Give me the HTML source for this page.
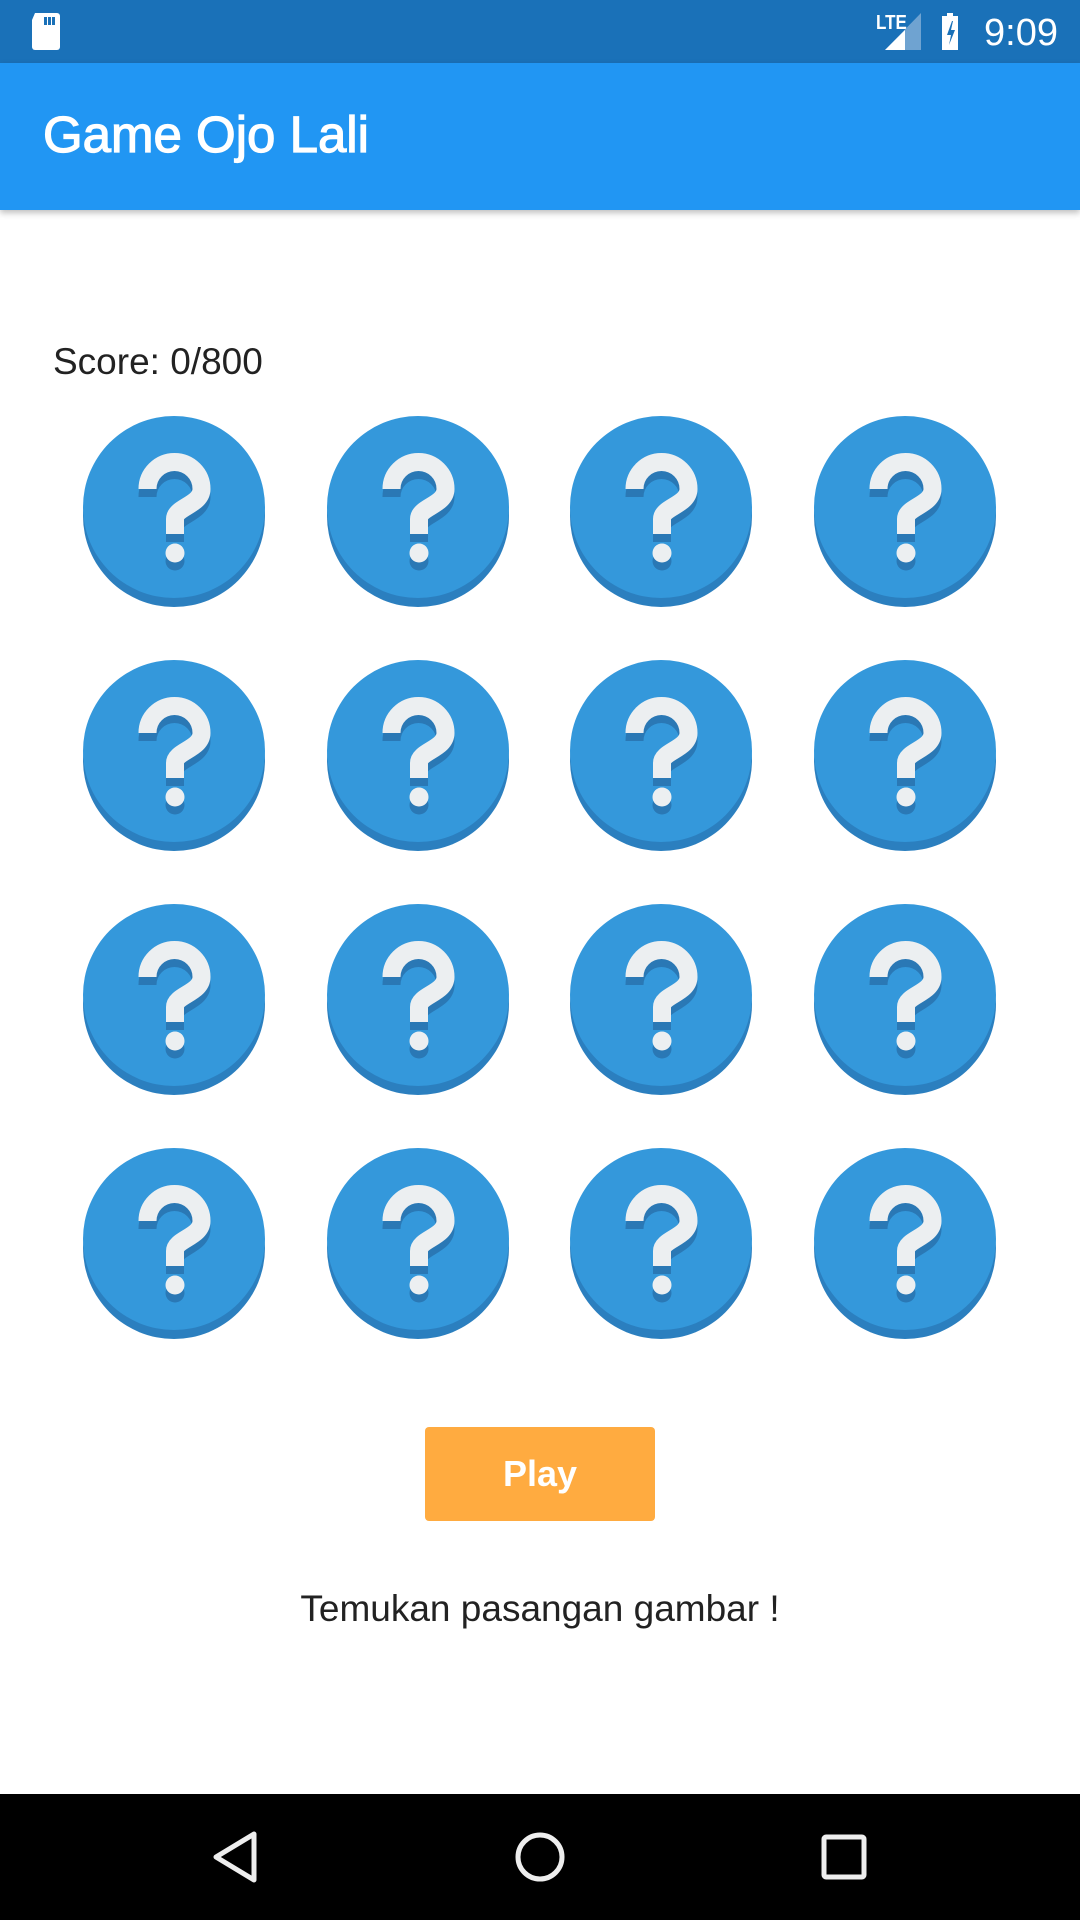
<!DOCTYPE html>
<html><head><meta charset="utf-8"><style>
*{margin:0;padding:0;box-sizing:border-box}
body{width:1080px;height:1920px;background:#fff;position:relative;overflow:hidden;font-family:"Liberation Sans",sans-serif}
.sb{position:absolute;left:0;top:0;width:1080px;height:63px;background:#1a71b8}
.ab{position:absolute;left:0;top:63px;width:1080px;height:147px;background:#2196f3;box-shadow:0 3px 6px rgba(0,0,0,.25)}
.title{position:absolute;left:43px;top:105px;color:#fff;font-size:51px;line-height:60px;-webkit-text-stroke:1.2px #fff}
.score{position:absolute;left:53px;top:338px;font-size:37px;line-height:48px;color:#222}
.ic{position:absolute;width:182px;height:192px}
.play{position:absolute;left:425px;top:1427px;width:230px;height:94px;background:#ffab40;border-radius:4px;color:#fff;font-weight:bold;font-size:36px;text-align:center;line-height:94px}
.msg{position:absolute;left:0;width:1080px;top:1584px;text-align:center;font-size:37px;line-height:50px;color:#222}
.nav{position:absolute;left:0;top:1794px;width:1080px;height:126px;background:#000}
</style></head><body>
<div class="sb">
<svg width="1080" height="63" style="position:absolute;left:0;top:0">
<path d="M35 13h22a3 3 0 0 1 3 3v31a3 3 0 0 1-3 3H35a3 3 0 0 1-3-3V20z" fill="#fff"/>
<rect x="44" y="17" width="3" height="8" fill="#1a71b8"/><rect x="48" y="17" width="3" height="8" fill="#1a71b8"/><rect x="52" y="17" width="3" height="8" fill="#1a71b8"/>
<text x="876" y="29" font-family="Liberation Sans" font-size="17" font-weight="bold" fill="#fff" transform="scale(1,1.2) translate(0,-5)">LTE</text>
<path d="M885 50L921 13V50z" fill="#6fa3d1"/><path d="M885 50L905 30V50z" fill="#fff"/>
<path d="M947 13h6v3h5v34h-16V16h5z" fill="#fff"/><path d="M952 21l-5 14h4l-2 10 6-15h-4l2-9z" fill="#1a71b8"/>
<text x="1058" y="45" text-anchor="end" font-family="Liberation Sans" font-size="38" fill="#fff">9:09</text>
</svg></div>
<div class="ab"></div>
<div class="title">Game Ojo Lali</div>
<div class="score">Score: 0/800</div>
<div id="g"></div>
<div class="play">Play</div>
<div class="msg">Temukan pasangan gambar !</div>
<div class="nav">
<svg width="1080" height="126">
<path d="M254 40L216 63L254 86Z" fill="none" stroke="#eee" stroke-width="5" stroke-linejoin="round"/>
<circle cx="540" cy="63" r="22" fill="none" stroke="#eee" stroke-width="5"/>
<rect x="824" y="43" width="40" height="40" rx="2" fill="none" stroke="#eee" stroke-width="5"/>
</svg></div>
<script>
var xs=[174,418,661,905],ys=[507,751,995,1239],h='';
var q='<svg class="ic" viewBox="-91 -91 182 192"><circle cx="0" cy="9" r="91" fill="#2b7fbf"/><circle cx="0" cy="0" r="91" fill="#3498db"/>'+
'<g transform="translate(0,8)" fill="none" stroke="#2a78b5" stroke-width="18"><path d="M-26.5 -18A27 27 0 0 1 27.5 -18C27.5 -2 1 0 1 12V27"/></g><circle cx="1" cy="54" r="9.5" fill="#2a78b5"/>'+
'<path d="M-26.5 -18A27 27 0 0 1 27.5 -18C27.5 -2 1 0 1 12V27" fill="none" stroke="#eceff1" stroke-width="18"/><circle cx="1" cy="46" r="9.5" fill="#eceff1"/></svg>';
for(var r=0;r<4;r++)for(var c=0;c<4;c++)h+='<div style="position:absolute;left:'+(xs[c]-91)+'px;top:'+(ys[r]-91)+'px">'+q+'</div>';
document.getElementById('g').innerHTML=h;
</script>
</body></html>
